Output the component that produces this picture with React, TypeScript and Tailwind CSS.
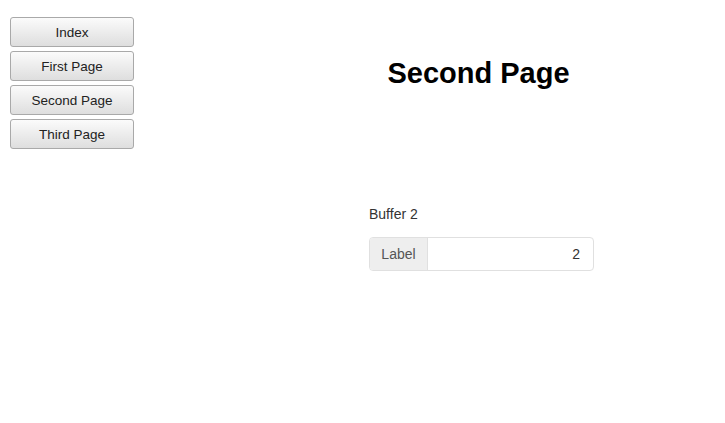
export default function App() {
  const pages = ["Index", "First Page", "Second Page", "Third Page"];

  return (
    <div className="flex h-[423px] w-[725px] bg-white font-['Liberation_Sans',Arial,sans-serif] text-[#333]">
      {/* nav buttons */}
      <div className="ml-[10px] mt-[17px] flex w-[124px] flex-col gap-[4px]">
        {pages.map((p) => (
          <button
            key={p}
            className="h-[30px] w-full rounded-[3px] border border-[#a9a9a9] bg-gradient-to-b from-[#fbfbfb] to-[#dedede] pt-[2px] text-[13.5px] leading-none text-[#222]"
          >
            {p}
          </button>
        ))}
      </div>

      {/* page content */}
      <div className="ml-[235px] flex flex-col">
        <h1 className="mt-[59px] w-[219px] text-center text-[29px] font-bold leading-none text-black">
          Second Page
        </h1>
        <div className="mt-[116px] text-[14px] leading-[20px]">Buffer 2</div>
        <div className="mt-[13px] flex h-[34px] w-[225px] rounded-[4px] border border-[#e0e0e0] text-[14px]">
          <span className="flex w-[58px] items-center justify-center rounded-l-[3px] border-r border-[#e0e0e0] bg-[#eeeeee] pt-[1px] text-[#555]">
            Label
          </span>
          <span className="flex flex-1 items-center justify-end pr-[13px] pt-[1px] text-[#333]">2</span>
        </div>
      </div>
    </div>
  );
}
